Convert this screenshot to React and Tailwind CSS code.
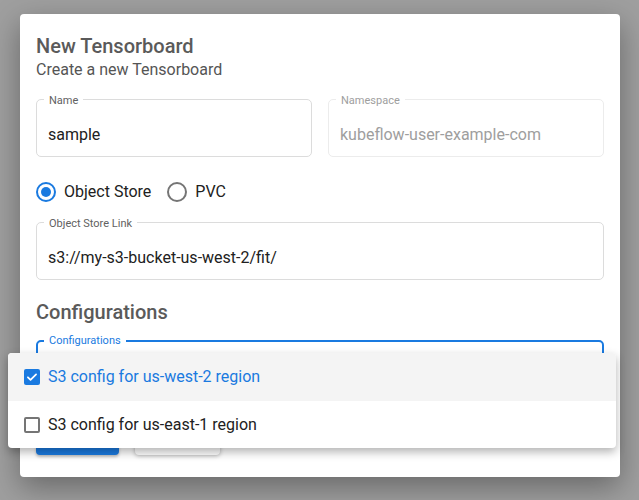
import React from "react";

function OutlinedField({ label, value, disabled, className = "" }) {
  return (
    <div
      className={`relative h-[58px] rounded-[5px] border ${
        disabled ? "border-[#ececec]" : "border-[#dcdcdc]"
      } ${className}`}
    >
      <span
        className={`absolute left-[7px] top-[-6px] bg-white px-[5px] text-[11px] leading-[14px] ${
          disabled ? "text-[#9e9e9e]" : "text-[#616161]"
        }`}
      >
        {label}
      </span>
      <div
        className={`flex h-full items-center pl-[11px] pt-[13px] text-[16px] ${
          disabled ? "text-[#9e9e9e]" : "text-[#212121]"
        }`}
      >
        {value}
      </div>
    </div>
  );
}

function Radio({ checked, label }) {
  return (
    <label className="flex items-center gap-[8px]">
      <span
        className={`flex h-[20px] w-[20px] items-center justify-center rounded-full border-2 ${
          checked ? "border-[#1a7ae0]" : "border-[#757575]"
        }`}
      >
        {checked ? (
          <span className="h-[10px] w-[10px] rounded-full bg-[#1a7ae0]" />
        ) : null}
      </span>
      <span className="text-[16px] text-[#212121]">{label}</span>
    </label>
  );
}

function Checkbox({ checked }) {
  return checked ? (
    <span className="flex h-[16px] w-[16px] items-center justify-center rounded-[2px] bg-[#1a7ae0]">
      <svg viewBox="0 0 24 24" className="h-[14px] w-[14px]" fill="none">
        <path
          d="M5 12.5l4.5 4.5L19 7.5"
          stroke="white"
          strokeWidth="3"
          strokeLinecap="round"
          strokeLinejoin="round"
        />
      </svg>
    </span>
  ) : (
    <span className="h-[16px] w-[16px] rounded-[2px] border-2 border-[#757575]" />
  );
}

export default function App() {
  return (
    <div
      className="relative h-[500px] w-full overflow-hidden bg-[#9f9f9f] pl-[20px] pt-[14px]"
      style={{ fontFamily: "Roboto, 'Liberation Sans', sans-serif" }}
    >
      <div className="flex h-[463px] w-[600px] flex-col rounded-[4px] bg-white px-[16px] pt-[20px] shadow-[0_10px_30px_rgba(0,0,0,0.35)]">
        <h2 className="text-[20px] font-medium leading-[24px] text-[#5a5a5a]">
          New Tensorboard
        </h2>
        <p className="mt-[2px] text-[16px] leading-[20px] text-[#555]">
          Create a new Tensorboard
        </p>

        <div className="mt-[19px] flex gap-[16px]">
          <OutlinedField label="Name" value="sample" className="flex-1" />
          <OutlinedField
            label="Namespace"
            value="kubeflow-user-example-com"
            disabled
            className="flex-1"
          />
        </div>

        <div className="mt-[23px] flex items-center gap-[16px]">
          <Radio checked label="Object Store" />
          <Radio label="PVC" />
        </div>

        <OutlinedField
          label="Object Store Link"
          value="s3://my-s3-bucket-us-west-2/fit/"
          className="mt-[18px]"
        />

        <h3 className="mt-[20px] text-[20px] font-medium leading-[24px] text-[#5a5a5a]">
          Configurations
        </h3>

        <div className="relative mt-[16px] h-[58px] rounded-[5px] border-2 border-[#1a7ae0]">
          <span className="absolute left-[6px] top-[-8px] bg-white px-[5px] text-[11px] leading-[14px] text-[#1a7ae0]">
            Configurations
          </span>
        </div>

        <div className="mt-[21px] flex gap-[16px]">
          <button className="h-[36px] w-[83px] rounded-[4px] bg-[#1a7ae0] shadow-[0_2px_3px_rgba(0,0,0,0.25)]" />
          <button className="h-[36px] w-[85px] rounded-[4px] bg-white shadow-[0_1px_4px_rgba(0,0,0,0.3)]" />
        </div>
      </div>

      <div className="absolute left-[8px] top-[353px] w-[608px] overflow-hidden rounded-[4px] bg-white shadow-[0_4px_10px_rgba(0,0,0,0.3)]">
        <div className="flex h-[48px] items-center gap-[8px] bg-[#f4f4f4] pl-[16px]">
          <Checkbox checked />
          <span className="text-[16px] text-[#1a7ae0]">
            S3 config for us-west-2 region
          </span>
        </div>
        <div className="flex h-[47px] items-center gap-[8px] pl-[16px]">
          <Checkbox />
          <span className="text-[16px] text-[#212121]">
            S3 config for us-east-1 region
          </span>
        </div>
      </div>
    </div>
  );
}
